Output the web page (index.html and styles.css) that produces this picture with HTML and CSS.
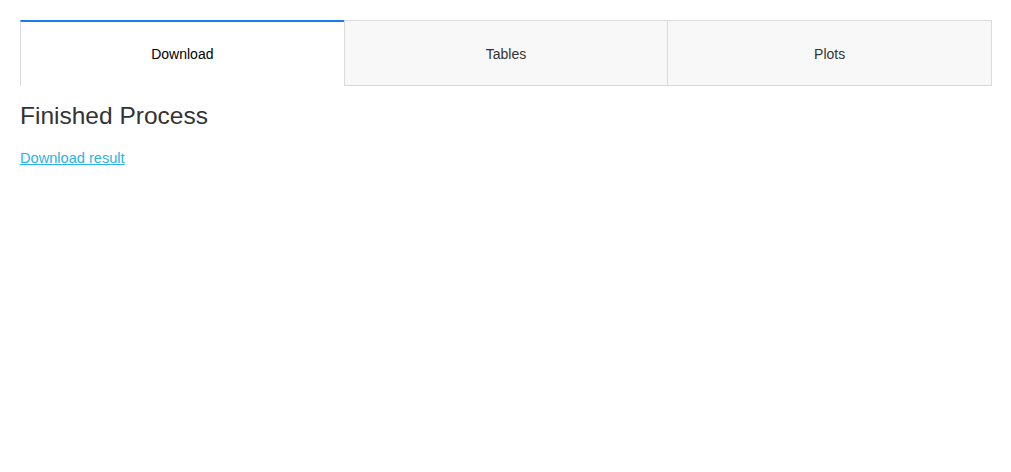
FILE: index.html
```html
<!DOCTYPE html>
<html lang="en">
<head>
    <meta charset="UTF-8">
    <meta name="viewport" content="width=device-width, initial-scale=1.0">
    <title>Finished Process</title>
    <link rel="stylesheet" href="styles.css">
</head>
<body>

<div class="page">
    <div class="tabs">
        <div class="tab active">Download</div>
        <div class="tab">Tables</div>
        <div class="tab">Plots</div>
    </div>

    <div class="tab-content">
        <h2>Finished Process</h2>
        <a href="#" class="result-link">Download result</a>
    </div>
</div>

</body>
</html>
```

FILE: styles.css
```css
body {
    margin: 0;
    font-family: "Liberation Sans", Arial, sans-serif;
    background-color: #fff;
    color: #333;
}

.page {
    padding: 20px 19px 20px 20px;
    min-height: 432px;
}

.tabs {
    display: flex;
}

.tab {
    flex: 1;
    height: 63px;
    padding-top: 1px;
    display: flex;
    align-items: center;
    justify-content: center;
    font-size: 14px;
    color: #333;
    background-color: #f8f8f8;
    border: 1px solid #dadada;
    border-left: none;
}

.tab.active {
    color: #000;
    background-color: #fff;
    border-top: 2px solid #1a7cf0;
    border-left: 1px solid #dadada;
    border-right: none;
    border-bottom: none;
    height: 64px;
    padding-top: 0;
}

.tab.active + .tab {
    border-left: 1px solid #dadada;
}

.tab-content h2 {
    margin: 15px 0 0 0;
    font-size: 24.5px;
    font-weight: normal;
    line-height: 30px;
    color: #333;
}

.result-link {
    display: inline-block;
    margin-top: 19px;
    font-size: 14.6px;
    color: #2ab3e3;
}
```
